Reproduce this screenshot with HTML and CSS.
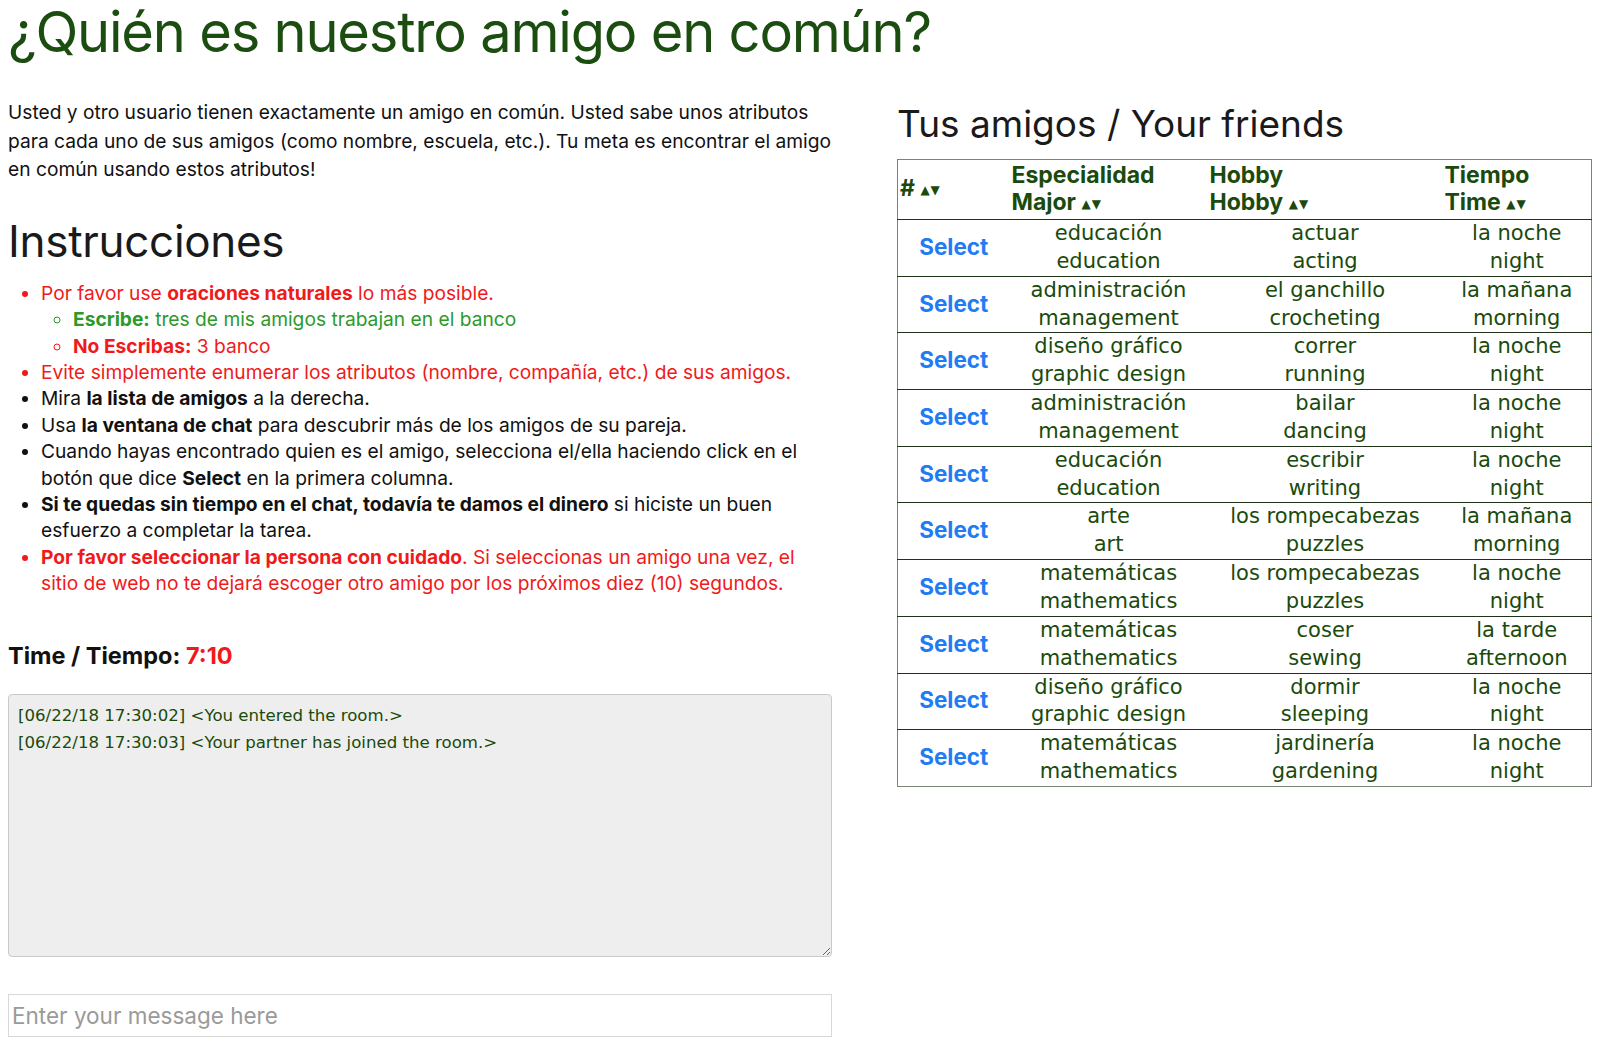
FILE: index.html
```html
<!DOCTYPE html>
<html lang="es">
<head>
<meta charset="utf-8">
<title>¿Quién es nuestro amigo en común?</title>
<link rel="stylesheet" href="styles.css">
</head>
<body>
<h1 class="title">¿Quién es nuestro amigo en común?</h1>
<div class="layout">
  <div class="left">
    <p class="intro">Usted y otro usuario tienen exactamente un amigo en común. Usted sabe unos atributos para cada uno de sus amigos (como nombre, escuela, etc.). Tu meta es encontrar el amigo en común usando estos atributos!</p>
    <h2 class="instr-title">Instrucciones</h2>
    <ul class="instr">
      <li class="red">Por favor use <b>oraciones naturales</b> lo más posible.
        <ul class="sub">
          <li class="green"><b>Escribe:</b> tres de mis amigos trabajan en el banco</li>
          <li class="red"><b>No Escribas:</b> 3 banco</li>
        </ul>
      </li>
      <li class="red">Evite simplemente enumerar los atributos (nombre, compañía, etc.) de sus amigos.</li>
      <li>Mira <b>la lista de amigos</b> a la derecha.</li>
      <li>Usa <b>la ventana de chat</b> para descubrir más de los amigos de su pareja.</li>
      <li>Cuando hayas encontrado quien es el amigo, selecciona el/ella haciendo click en el botón que dice <b>Select</b> en la primera columna.</li>
      <li><b>Si te quedas sin tiempo en el chat, todavía te damos el dinero</b> si hiciste un buen esfuerzo a completar la tarea.</li>
      <li class="red"><b>Por favor seleccionar la persona con cuidado</b>. Si seleccionas un amigo una vez, el sitio de web no te dejará escoger otro amigo por los próximos diez (10) segundos.</li>
    </ul>
    <div class="timer">Time / Tiempo: <span class="time-left">7:10</span></div>
    <textarea class="chat" readonly>[06/22/18 17:30:02] &lt;You entered the room.&gt;
[06/22/18 17:30:03] &lt;Your partner has joined the room.&gt;</textarea>
    <input class="msg" type="text" placeholder="Enter your message here">
  </div>
  <div class="right">
    <h2 class="friends-title">Tus amigos / Your friends</h2>
    <table class="friends">
      <colgroup>
        <col class="c-num"><col class="c-major"><col class="c-hobby"><col class="c-time">
      </colgroup>
      <thead>
        <tr>
          <th># <span class="sort">▲▼</span></th>
          <th>Especialidad<br>Major <span class="sort">▲▼</span></th>
          <th>Hobby<br>Hobby <span class="sort">▲▼</span></th>
          <th>Tiempo<br>Time <span class="sort">▲▼</span></th>
        </tr>
      </thead>
      <tbody>
        <tr><td><button class="select">Select</button></td><td>educación<br>education</td><td>actuar<br>acting</td><td>la noche<br>night</td></tr>
        <tr><td><button class="select">Select</button></td><td>administración<br>management</td><td>el ganchillo<br>crocheting</td><td>la mañana<br>morning</td></tr>
        <tr><td><button class="select">Select</button></td><td>diseño gráfico<br>graphic design</td><td>correr<br>running</td><td>la noche<br>night</td></tr>
        <tr><td><button class="select">Select</button></td><td>administración<br>management</td><td>bailar<br>dancing</td><td>la noche<br>night</td></tr>
        <tr><td><button class="select">Select</button></td><td>educación<br>education</td><td>escribir<br>writing</td><td>la noche<br>night</td></tr>
        <tr><td><button class="select">Select</button></td><td>arte<br>art</td><td>los rompecabezas<br>puzzles</td><td>la mañana<br>morning</td></tr>
        <tr><td><button class="select">Select</button></td><td>matemáticas<br>mathematics</td><td>los rompecabezas<br>puzzles</td><td>la noche<br>night</td></tr>
        <tr><td><button class="select">Select</button></td><td>matemáticas<br>mathematics</td><td>coser<br>sewing</td><td>la tarde<br>afternoon</td></tr>
        <tr><td><button class="select">Select</button></td><td>diseño gráfico<br>graphic design</td><td>dormir<br>sleeping</td><td>la noche<br>night</td></tr>
        <tr><td><button class="select">Select</button></td><td>matemáticas<br>mathematics</td><td>jardinería<br>gardening</td><td>la noche<br>night</td></tr>
      </tbody>
    </table>
  </div>
</div>
</body>
</html>
```

FILE: styles.css
```css
html, body {
  margin: 0;
  padding: 0;
  background: #ffffff;
}
body {
  padding: 0 8px;
  font-family: Inter, "Liberation Sans", sans-serif;
  color: #111111;
}
.title {
  margin: 0;
  font-size: 56px;
  line-height: 64px;
  font-weight: 400;
  color: #1c4d10;
  letter-spacing: -1.2px;
  white-space: nowrap;
}
.layout {
  display: flex;
  margin-top: 34px;
  gap: 65px;
}
.left {
  width: 824px;
  flex: 0 0 824px;
}
.right {
  width: 694px;
  flex: 0 0 694px;
}
.intro {
  margin: 0;
  font-size: 19.2px;
  line-height: 28.6px;
}
.instr-title {
  margin: 30px 0 0;
  font-size: 44px;
  line-height: 55px;
  font-weight: 400;
  letter-spacing: -0.3px;
  color: #1a1a1a;
}
.instr {
  margin: 11px 0 0;
  padding-left: 33px;
  font-size: 19.2px;
  line-height: 26.4px;
}
.instr .sub {
  margin: 0;
  padding-left: 32px;
  list-style-type: circle;
}
.red { color: #f01a1a; }
.green { color: #2b9a2b; }
.timer {
  margin-top: 44px;
  font-size: 23.5px;
  line-height: 30px;
  font-weight: 700;
  color: #111111;
}
.time-left { color: #f01a1a; }
.chat {
  display: block;
  box-sizing: border-box;
  margin: 23px 0 0;
  width: 824px;
  height: 263px;
  padding: 7px 9px;
  background: #eeeeee;
  border: 1px solid #c9c9c9;
  border-radius: 4px;
  font-family: "DejaVu Sans", sans-serif;
  font-size: 16.6px;
  line-height: 27.7px;
  color: #1a4a0c;
  resize: vertical;
  outline: none;
}
.msg {
  display: block;
  box-sizing: border-box;
  margin: 37px 0 0;
  width: 824px;
  height: 43px;
  padding: 0 3px;
  border: 1px solid #d8d8d8;
  border-radius: 0;
  font-family: Inter, "Liberation Sans", sans-serif;
  font-size: 22.5px;
  color: #333;
  outline: none;
}
.msg::placeholder { color: #9a9a9a; }
.friends-title {
  margin: 3px 0 0;
  font-size: 37px;
  line-height: 46px;
  font-weight: 400;
  color: #1a1a1a;
}
.friends {
  margin-top: 12px;
  width: 694px;
  table-layout: fixed;
  border-collapse: collapse;
  border: 1px solid #7b8577;
}
.c-num { width: 112px; }
.c-major { width: 198px; }
.c-hobby { width: 235px; }
.c-time { width: 149px; }
.friends th {
  height: 58px;
  padding: 1px 2px 0;
  text-align: left;
  vertical-align: middle;
  font-size: 23px;
  line-height: 27.5px;
  font-weight: 700;
  color: #1a4a0c;
  border-bottom: 1px solid #1e3318;
}
.sort {
  font-family: "DejaVu Sans", sans-serif;
  font-size: 12px;
  letter-spacing: 1px;
  vertical-align: 2px;
}
.friends td {
  height: 55.7px;
  padding: 0;
  text-align: center;
  vertical-align: middle;
  font-family: "DejaVu Sans", sans-serif;
  font-size: 21px;
  line-height: 27.8px;
  color: #1a4a0c;
  border-top: 1px solid #1e3318;
}
.select {
  background: none;
  border: 0;
  padding: 0;
  font-family: Inter, "Liberation Sans", sans-serif;
  font-size: 22.5px;
  font-weight: 700;
  color: #1f7cf3;
  cursor: pointer;
}
```
